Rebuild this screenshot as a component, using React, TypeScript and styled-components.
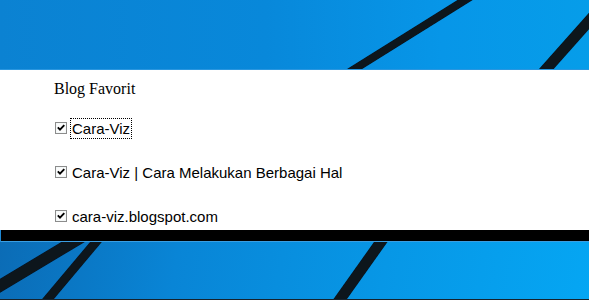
import styled, { createGlobalStyle } from "styled-components";

const GlobalStyle = createGlobalStyle`
  html, body {
    margin: 0;
    padding: 0;
    height: 300px;
    overflow: hidden;
    background: #0789da;
  }
  #root {
    height: 300px;
  }
`;

// wallpaper stripes, in page coordinates (each strip crops its part)
const stripes = [
  { x1: 473, y1: -5, x2: 345, y2: 75, w: 8 },
  { x1: 612, y1: -5, x2: 541, y2: 75, w: 11 },
  { x1: 83, y1: 236, x2: -32, y2: 305, w: 12 },
  { x1: 101, y1: 236, x2: 43, y2: 305, w: 9 },
  { x1: 385, y1: 236, x2: 336, y2: 305, w: 11 },
];

const items = [
  { label: "Cara-Viz", focused: true },
  { label: "Cara-Viz | Cara Melakukan Berbagai Hal", focused: false },
  { label: "cara-viz.blogspot.com", focused: false },
];

const Wallpaper = ({ top, height }: { top: number; height: number }) => (
  <svg width="589" height={height} viewBox={`0 ${top} 589 ${height}`}>
    <defs>
      <filter id={`soft${top}`}>
        <feGaussianBlur stdDeviation="0.6" />
      </filter>
    </defs>
    <g filter={`url(#soft${top})`}>
      {stripes.map((s, i) => (
        <line
          key={i}
          x1={s.x1}
          y1={s.y1}
          x2={s.x2}
          y2={s.y2}
          stroke="#08121a"
          strokeWidth={s.w}
        />
      ))}
    </g>
  </svg>
);

const CheckBox = () => (
  <CheckIcon width="12" height="12" viewBox="0 0 12 12">
    <rect x="0.5" y="0.5" width="11" height="11" fill="#eef6f6" stroke="#8c8c8c" />
    <rect x="1.5" y="1.5" width="9" height="9" fill="#fcfcfc" />
    <polyline
      points="2.8,5.4 5,7.6 9.3,3.2"
      fill="none"
      stroke="#000"
      strokeWidth="1.9"
    />
  </CheckIcon>
);

const App = () => {
  return (
    <>
      <GlobalStyle />
      <Desktop>
        <Strip $variant="top" $h={70}>
          <Wallpaper top={0} height={69} />
        </Strip>
        <Panel>
          <Title>Blog Favorit</Title>
          <List>
            {items.map((item) => (
              <Row key={item.label}>
                <CheckBox />
                <Label $focused={item.focused}>{item.label}</Label>
              </Row>
            ))}
          </List>
        </Panel>
        <Taskbar />
        <Strip $variant="bottom" $h={57}>
          <Wallpaper top={242} height={57} />
        </Strip>
        <Edge />
      </Desktop>
    </>
  );
};

const Desktop = styled.div`
  display: flex;
  flex-direction: column;
  width: 589px;
  height: 300px;
`;

const Strip = styled.div<{ $variant: "top" | "bottom"; $h: number }>`
  flex: none;
  height: ${(p) => p.$h}px;
  box-sizing: border-box;
  overflow: hidden;
  background: ${(p) =>
    p.$variant === "top"
      ? "linear-gradient(90deg, #0b82d2 0%, #0888da 45%, #0796e8 75%, #069de9 100%)"
      : "linear-gradient(100deg, #0b6cb6 0%, #0985d6 30%, #0797e6 65%, #05a6f3 100%)"};
  border-bottom: ${(p) => (p.$variant === "top" ? "1px solid #2a96df" : "none")};
  svg {
    display: block;
  }
`;

const Panel = styled.div`
  flex: none;
  height: 160px;
  box-sizing: border-box;
  background: #fff;
  padding: 9px 0 0 54px;
`;

const Title = styled.div`
  font-family: "Liberation Serif", "Times New Roman", serif;
  font-size: 16px;
  line-height: 20px;
  color: #000;
`;

const List = styled.div`
  display: flex;
  flex-direction: column;
  margin-top: 19px;
`;

const Row = styled.div`
  display: flex;
  align-items: baseline;
  height: 44px;
  padding-left: 1px;
  font-family: "Liberation Sans", Arial, sans-serif;
  font-size: 15px;
  color: #000;
`;

const CheckIcon = styled.svg`
  flex: none;
  display: block;
`;

const Label = styled.span<{ $focused: boolean }>`
  margin-left: 3px;
  padding: 1px;
  border: 1px ${(p) => (p.$focused ? "dotted #000" : "solid transparent")};
  white-space: nowrap;
`;

const Taskbar = styled.div`
  flex: none;
  height: 12px;
  box-sizing: border-box;
  background: #000;
  border-left: 1px solid #1e88d4;
  border-bottom: 1px solid #3a9ee2;
`;

const Edge = styled.div`
  flex: none;
  height: 1px;
  background: #16222c;
`;

export default App;
